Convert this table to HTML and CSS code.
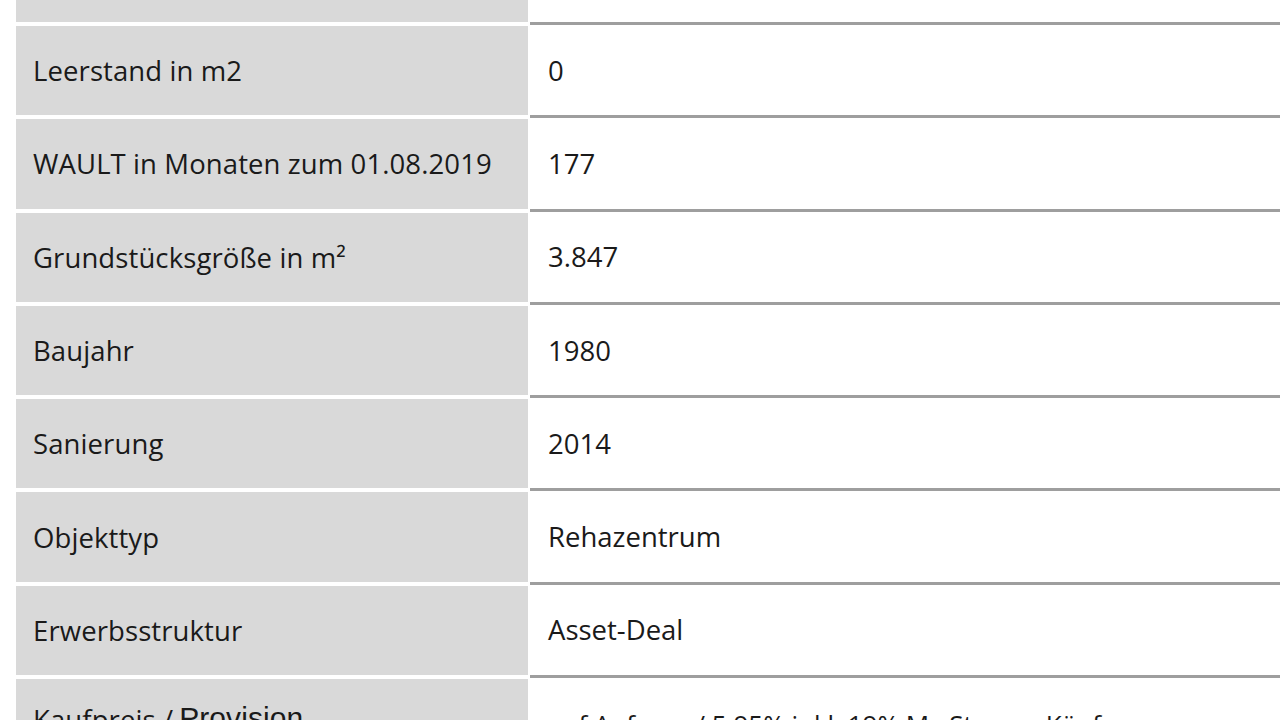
FILE: index.html
```html
<!DOCTYPE html>
<html lang="de">
<head>
    <meta charset="UTF-8">
    <meta name="viewport" content="width=device-width, initial-scale=1.0">
    <title>Objektdaten</title>
    <link rel="stylesheet" href="styles.css">
</head>
<body>
    <div class="sheet">
        <div class="row">
            <div class="label"></div>
            <div class="value"></div>
        </div>
        <div class="row">
            <div class="label">Leerstand in m2</div>
            <div class="value">0</div>
        </div>
        <div class="row">
            <div class="label">WAULT in Monaten zum 01.08.2019</div>
            <div class="value">177</div>
        </div>
        <div class="row">
            <div class="label">Grundstücksgröße in m²</div>
            <div class="value">3.847</div>
        </div>
        <div class="row">
            <div class="label">Baujahr</div>
            <div class="value">1980</div>
        </div>
        <div class="row">
            <div class="label">Sanierung</div>
            <div class="value">2014</div>
        </div>
        <div class="row">
            <div class="label">Objekttyp</div>
            <div class="value">Rehazentrum</div>
        </div>
        <div class="row">
            <div class="label">Erwerbsstruktur</div>
            <div class="value">Asset-Deal</div>
        </div>
        <div class="row row-tall">
            <div class="label">Kaufpreis / <span class="alt">Provision</span></div>
            <div class="value">auf Anfrage / 5,95% inkl. 19% MwSt. vom Käufer</div>
        </div>
    </div>
</body>
</html>
```

FILE: styles.css
```css
body {
    margin: 0;
    background: #ffffff;
    font-family: "Open Sans", "Noto Sans", sans-serif;
    color: #1a1a1a;
    overflow: hidden;
}
.sheet {
    margin-top: -71.3px;
    padding-left: 16px;
}
.row {
    display: grid;
    grid-template-columns: 512px 1fr;
    column-gap: 2px;
    height: 93.3px;
}
.label {
    margin-top: 4px;
    background: #d9d9d9;
    padding-left: 17px;
    display: flex;
    align-items: center;
    font-size: 27.5px;
    letter-spacing: 0.1px;
}
.value {
    border-top: 3px solid #9e9e9e;
    padding-left: 18px;
    display: flex;
    align-items: center;
    font-size: 27.5px;
}
.row-tall {
    height: 140px;
}
.row-tall .label,
.row-tall .value {
    align-items: flex-start;
    padding-top: 22px;
}
.row-tall .value {
    padding-top: 28px;
    font-size: 26px;
}
.alt {
    font-family: "Liberation Sans", Arial, sans-serif;
    font-size: 30px;
    margin-left: 6px;
}
```
